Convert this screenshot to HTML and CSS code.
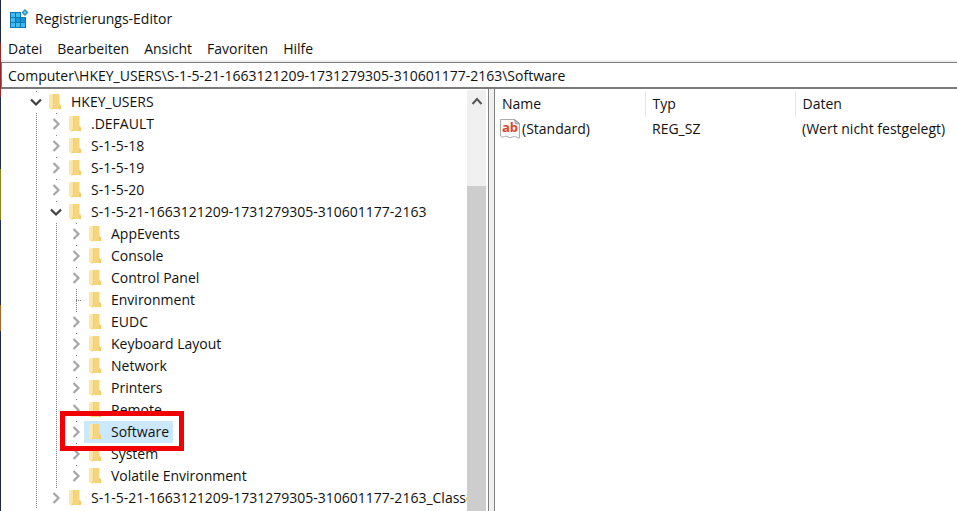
FILE: index.html
```html
<!DOCTYPE html>
<html lang="de">
<head>
    <meta charset="UTF-8">
    <meta name="viewport" content="width=device-width, initial-scale=1.0">
    <title>Registrierungs-Editor</title>
    <link rel="stylesheet" href="styles.css">
</head>
<body>

<!-- icons used more than once -->
<svg class="sprite" aria-hidden="true">
    <symbol id="folder" viewBox="0 0 14 18">
        <path d="M4 1h7.500v10l1.500 1.500V16H4z" fill="#f6d57c"/>
        <path d="M11.500 11l1.500 1.500V16h-2z" fill="#f0ca68"/>
        <path d="M1 1.500L4 1l1.500 1v11.500L3.500 17 1 15z" fill="#fce7ab"/>
        <path d="M5.500 2v11.500L4 16.500" stroke="#f1cd6c" fill="none"/>
    </symbol>
    <symbol id="closed" viewBox="0 0 12 12">
        <path d="M3.500 1l5 5-5 5" fill="none" stroke="#a6a6a6" stroke-width="2.200"/>
    </symbol>
    <symbol id="open" viewBox="0 0 12 12">
        <path d="M1 3.500l5 5 5-5" fill="none" stroke="#404040" stroke-width="2.200"/>
    </symbol>
</svg>

<div class="window">
    <header class="titlebar">
        <svg class="app-icon" viewBox="0 0 20 20">
            <path d="M1 3h11v5h5v11H1z" fill="#0d76b4"/>
            <path d="M2 4h4v4H2zM7 4h4v4H7zM2 9h4v4H2zM2 14h4v4H2zM7 14h4v4H7zM12 14h4v4h-4z" fill="#3fbdee"/>
            <path d="M7 9h4v4H7zM12 9h4v4h-4z" fill="#1695d6"/>
            <path d="M16 0l3.500 3.500L16 7l-3.500-3.500z" fill="#2f8fc4"/>
            <path d="M16 2l1.500 1.500L16 5l-1.500-1.500z" fill="#7fd3f5"/>
        </svg>
        <span>Registrierungs-Editor</span>
    </header>

    <nav class="menu">
        <button type="button">Datei</button>
        <button type="button">Bearbeiten</button>
        <button type="button">Ansicht</button>
        <button type="button">Favoriten</button>
        <button type="button">Hilfe</button>
    </nav>

    <input class="address" type="text" aria-label="Adresse" value="Computer\HKEY_USERS\S-1-5-21-1663121209-1731279305-310601177-2163\Software">

    <main class="panes">
        <div class="tree-pane">
            <ul class="tree root">
                <li>
                    <div class="key"><svg class="toggle"><use href="#open"/></svg><div class="label"><svg class="folder"><use href="#folder"/></svg><span>HKEY_USERS</span></div></div>
                    <ul class="tree">
                        <li><div class="key"><svg class="toggle"><use href="#closed"/></svg><div class="label"><svg class="folder"><use href="#folder"/></svg><span>.DEFAULT</span></div></div></li>
                        <li><div class="key"><svg class="toggle"><use href="#closed"/></svg><div class="label"><svg class="folder"><use href="#folder"/></svg><span>S-1-5-18</span></div></div></li>
                        <li><div class="key"><svg class="toggle"><use href="#closed"/></svg><div class="label"><svg class="folder"><use href="#folder"/></svg><span>S-1-5-19</span></div></div></li>
                        <li><div class="key"><svg class="toggle"><use href="#closed"/></svg><div class="label"><svg class="folder"><use href="#folder"/></svg><span>S-1-5-20</span></div></div></li>
                        <li>
                            <div class="key"><svg class="toggle"><use href="#open"/></svg><div class="label"><svg class="folder"><use href="#folder"/></svg><span>S-1-5-21-1663121209-1731279305-310601177-2163</span></div></div>
                            <ul class="tree">
                                <li><div class="key"><svg class="toggle"><use href="#closed"/></svg><div class="label"><svg class="folder"><use href="#folder"/></svg><span>AppEvents</span></div></div></li>
                                <li><div class="key"><svg class="toggle"><use href="#closed"/></svg><div class="label"><svg class="folder"><use href="#folder"/></svg><span>Console</span></div></div></li>
                                <li><div class="key"><svg class="toggle"><use href="#closed"/></svg><div class="label"><svg class="folder"><use href="#folder"/></svg><span>Control Panel</span></div></div></li>
                                <li><div class="key"><i class="leaf"></i><div class="label"><svg class="folder"><use href="#folder"/></svg><span>Environment</span></div></div></li>
                                <li><div class="key"><svg class="toggle"><use href="#closed"/></svg><div class="label"><svg class="folder"><use href="#folder"/></svg><span>EUDC</span></div></div></li>
                                <li><div class="key"><svg class="toggle"><use href="#closed"/></svg><div class="label"><svg class="folder"><use href="#folder"/></svg><span>Keyboard Layout</span></div></div></li>
                                <li><div class="key"><svg class="toggle"><use href="#closed"/></svg><div class="label"><svg class="folder"><use href="#folder"/></svg><span>Network</span></div></div></li>
                                <li><div class="key"><svg class="toggle"><use href="#closed"/></svg><div class="label"><svg class="folder"><use href="#folder"/></svg><span>Printers</span></div></div></li>
                                <li><div class="key"><svg class="toggle"><use href="#closed"/></svg><div class="label"><svg class="folder"><use href="#folder"/></svg><span>Remote</span></div></div></li>
                                <li><div class="key selected"><svg class="toggle"><use href="#closed"/></svg><div class="label"><svg class="folder"><use href="#folder"/></svg><span>Software</span></div><div class="marker"></div></div></li>
                                <li><div class="key"><svg class="toggle"><use href="#closed"/></svg><div class="label"><svg class="folder"><use href="#folder"/></svg><span>System</span></div></div></li>
                                <li class="end"><div class="key"><svg class="toggle"><use href="#closed"/></svg><div class="label"><svg class="folder"><use href="#folder"/></svg><span>Volatile Environment</span></div></div></li>
                            </ul>
                        </li>
                        <li><div class="key"><svg class="toggle"><use href="#closed"/></svg><div class="label"><svg class="folder"><use href="#folder"/></svg><span>S-1-5-21-1663121209-1731279305-310601177-2163_Classes</span></div></div></li>
                    </ul>
                </li>
            </ul>
        </div>

        <div class="scrollbar">
            <svg class="scroll-up" viewBox="0 0 12 8"><path d="M1.500 7L6 2l4.500 5" fill="none" stroke="#555" stroke-width="2"/></svg>
            <div class="thumb"></div>
        </div>
        <div class="splitter"></div>

        <div class="values">
            <table>
                <thead>
                    <tr><th class="name">Name</th><th class="type">Typ</th><th>Daten</th></tr>
                </thead>
                <tbody>
                    <tr>
                        <td class="value-cell">
                            <div class="value-name">
                                <svg class="string-icon" viewBox="0 0 20 20">
                                    <path d="M.5.500h14l5 4v14.500c-2 .5-3-1.500-5-1.500s-3 1.500-5 1-3-2-5-1-3 .5-4-.5z" fill="#fafafa" stroke="#aaa"/>
                                    <path d="M14.500.500l1 4 4 .5z" fill="#ccc" stroke="#999"/>
                                    <text x="2" y="13">ab</text>
                                </svg>
                                <span>(Standard)</span>
                            </div>
                        </td>
                        <td>REG_SZ</td>
                        <td>(Wert nicht festgelegt)</td>
                    </tr>
                </tbody>
            </table>
        </div>
    </main>
</div>

</body>
</html>
```

FILE: styles.css
```css
* {
    box-sizing: border-box;
}
body {
    margin: 0;
    height: 100vh;
    overflow: hidden;
    font-family: "Open Sans", "Noto Sans", sans-serif;
    font-size: 14px;
    line-height: 22px;
    color: #111;
    /* strip of desktop visible left of the window */
    background: linear-gradient(#1d2740 0 43px, #8e2a2a 43px 97px, #1d2f4c 97px 169px, #8a8420 169px 220px, #1d2f4c 220px 305px, #a06a2c 305px 331px, #1d2740 331px);
}
.sprite {
    display: none;
}
.window {
    height: 100%;
    display: flex;
    flex-direction: column;
    margin-left: 1px;
    background-color: #fff;
}
.titlebar {
    display: flex;
    align-items: center;
    gap: 6px;
    height: 38px;
    padding-left: 8px;
    flex: none;
}
.app-icon {
    width: 20px;
    height: 20px;
}
.menu {
    display: flex;
    gap: 15px;
    height: 24px;
    padding-left: 7px;
    border-bottom: 2px solid #f0f0f0;
    flex: none;
}
.menu button {
    font: inherit;
    color: inherit;
    background: none;
    border: none;
    padding: 0;
}
.address {
    width: 100%;
    height: 27px;
    padding: 0 6px;
    font: inherit;
    color: inherit;
    border: 1px solid #7a7a7a;
    border-width: 1px 0 2px 1px;
    outline: none;
    flex: none;
}
.panes {
    flex: 1;
    min-height: 0;
    display: flex;
}
.tree-pane {
    width: 466px;
    padding-top: 2px;
    overflow: hidden;
    flex: none;
}
.tree {
    list-style: none;
    margin: 0;
    padding: 0 0 0 20px;
}
.tree.root {
    padding-left: 29px;
}
/* dotted connector, hidden behind the toggles */
.tree li {
    background: repeating-linear-gradient(#808080 0 1px, #fff 1px 2px) 6px 0 / 1px 100% no-repeat;
}
.tree li.end {
    background-size: 1px 50%;
}
.key {
    display: flex;
    align-items: center;
    height: 22px;
    white-space: nowrap;
}
.toggle {
    width: 12px;
    height: 20px;
    background-color: #fff;
    flex: none;
}
.leaf {
    width: 12px;
    height: 1px;
    background: repeating-linear-gradient(90deg, #808080 0 1px, #fff 1px 2px) 6px 0 no-repeat;
    flex: none;
}
.label {
    display: flex;
    align-items: center;
    height: 22px;
    margin-left: 2px;
    padding: 0 4px;
}
.folder {
    width: 14px;
    height: 18px;
    margin-right: 9px;
    flex: none;
}
.selected {
    position: relative;
}
.selected .label {
    background-color: #cce8ff;
}
.marker {
    position: absolute;
    top: -10px;
    left: -10px;
    width: 124px;
    height: 40px;
    border: 5px solid #f00000;
}
.scrollbar {
    width: 19px;
    margin: 1px 2px 0 0;
    background-color: #f0f0f0;
    display: flex;
    flex-direction: column;
    align-items: center;
    flex: none;
}
.scroll-up {
    width: 12px;
    height: 8px;
    margin: 7px 0 81px;
    flex: none;
}
.thumb {
    width: 100%;
    flex: 1;
    background-color: #cdcdcd;
}
.splitter {
    width: 7px;
    border: 1px solid #808080;
    border-width: 0 1px;
    background-color: #f0f0f0;
    flex: none;
}
.values {
    flex: 1;
    min-width: 0;
    padding-top: 2px;
    overflow: hidden;
}
table {
    width: 100%;
    border-collapse: collapse;
    table-layout: fixed;
}
th, td {
    padding: 0 7px;
    text-align: left;
    font-weight: normal;
    white-space: nowrap;
}
th {
    height: 26px;
    border-right: 1px solid #e5e5e5;
}
th:last-child {
    border-right: none;
}
.name, .type {
    width: 150px;
}
td {
    height: 24px;
}
.value-cell {
    padding-left: 5px;
}
.value-name {
    display: flex;
    align-items: center;
    gap: 2px;
}
.string-icon {
    width: 20px;
    height: 20px;
}
.string-icon text {
    font-size: 13px;
    font-weight: bold;
    fill: #d9482b;
}
```
